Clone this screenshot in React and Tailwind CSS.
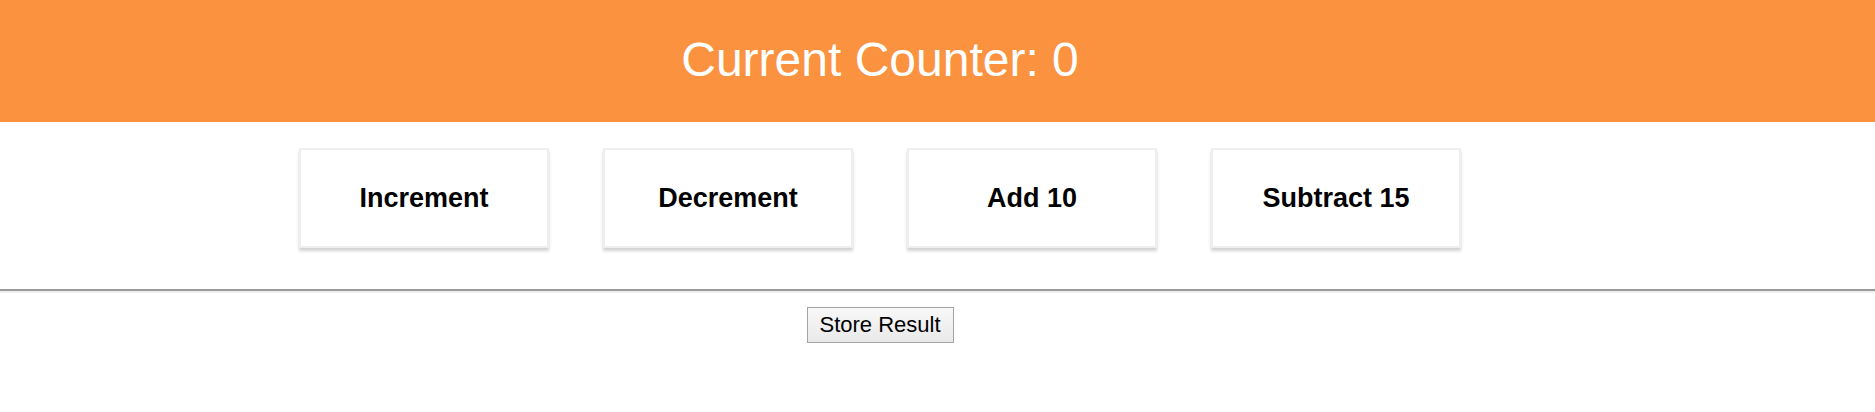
const actions = ['Increment', 'Decrement', 'Add 10', 'Subtract 15'];

function App() {
    return (
        <div className="w-full bg-white font-['Liberation_Sans',Arial,sans-serif]">
            {/* Header */}
            <div className="w-full h-[122px] bg-[#fb923f]">
                <div className="w-[1760px] pt-[33px] text-center">
                    <h1 className="text-[48px] leading-[54px] font-normal text-white">Current Counter: 0</h1>
                </div>
            </div>

            {/* Counter controls */}
            <div className="w-[1760px] flex justify-center gap-[54px] pt-[26px] pb-[41px]">
                {actions.map((label) => (
                    <button
                        key={label}
                        className="w-[250px] h-[100px] bg-white border-2 border-[#eeeeee] shadow-[0_3px_3px_rgba(0,0,0,0.18)] text-[27px] font-bold text-black"
                    >
                        {label}
                    </button>
                ))}
            </div>

            <div className="w-full h-[2px] bg-[#9a9a9a]"></div>
            <div className="w-full h-[2px] bg-[#eeeeee]"></div>

            <div className="w-[1760px] flex justify-center pt-[14px]">
                <button className="w-[147px] h-[36px] border border-[#a3a3a3] bg-gradient-to-b from-[#f8f8f8] to-[#e9e9e9] text-[22px] leading-none text-black">
                    Store Result
                </button>
            </div>
        </div>
    );
}

export default App;
